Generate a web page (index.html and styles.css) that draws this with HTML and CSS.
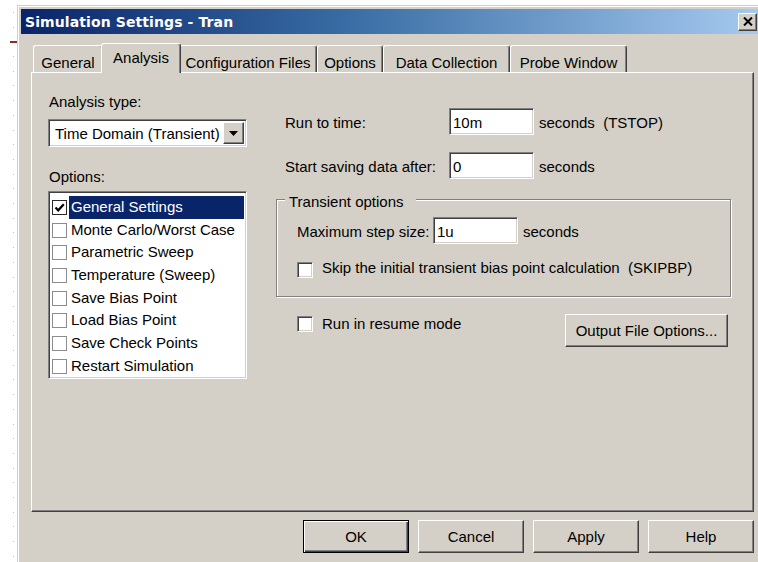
FILE: index.html
```html
<!DOCTYPE html>
<html lang="en">
<head>
<meta charset="utf-8">
<title>Simulation Settings - Tran</title>
<link rel="stylesheet" href="styles.css">
</head>
<body>
<div class="desk">
  <div class="gutter"></div>
  <div class="window">
    <div class="titlebar">
      <span class="title">Simulation Settings - Tran</span>
      <span class="close-btn">
        <svg width="10" height="9" viewBox="0 0 10 9"><path d="M1 0.5 L9 8.5 M9 0.5 L1 8.5" stroke="#000" stroke-width="2" fill="none"/></svg>
      </span>
    </div>

    <div class="tabs">
      <div class="tab tab-general">General</div>
      <div class="tab tab-analysis active">Analysis</div>
      <div class="tab tab-config">Configuration Files</div>
      <div class="tab tab-options">Options</div>
      <div class="tab tab-data">Data Collection</div>
      <div class="tab tab-probe">Probe Window</div>
    </div>

    <div class="panel">
      <div class="col-left">
        <div class="label">Analysis type:</div>
        <div class="combo">
          <span class="combo-text">Time Domain (Transient)</span>
          <span class="combo-btn">
            <svg width="9" height="5" viewBox="0 0 9 5"><path d="M0 0 H9 L4.5 5 Z" fill="#000"/></svg>
          </span>
        </div>
        <div class="label label-options">Options:</div>
        <ul class="listbox">
          <li class="item selected"><span class="flat-check checked"><svg width="13" height="13" viewBox="0 0 13 13"><path d="M2.5 6.5 L5.2 9.3 L10.8 3.2" stroke="#000" stroke-width="2.2" fill="none"/></svg></span><span class="item-text">General Settings</span></li>
          <li class="item"><span class="flat-check"></span><span class="item-text">Monte Carlo/Worst Case</span></li>
          <li class="item"><span class="flat-check"></span><span class="item-text">Parametric Sweep</span></li>
          <li class="item"><span class="flat-check"></span><span class="item-text">Temperature (Sweep)</span></li>
          <li class="item"><span class="flat-check"></span><span class="item-text">Save Bias Point</span></li>
          <li class="item"><span class="flat-check"></span><span class="item-text">Load Bias Point</span></li>
          <li class="item"><span class="flat-check"></span><span class="item-text">Save Check Points</span></li>
          <li class="item"><span class="flat-check"></span><span class="item-text">Restart Simulation</span></li>
        </ul>
      </div>

      <div class="col-right">
        <div class="field-row">
          <span class="field-label">Run to time:</span>
          <div class="edit">10m</div>
          <span class="unit">seconds&nbsp; (TSTOP)</span>
        </div>
        <div class="field-row second">
          <span class="field-label">Start saving data after:</span>
          <div class="edit">0</div>
          <span class="unit">seconds</span>
        </div>

        <fieldset class="group">
          <legend>Transient options</legend>
          <div class="field-row step">
            <span class="field-label">Maximum step size:</span>
            <div class="edit">1u</div>
            <span class="unit">seconds</span>
          </div>
          <div class="check-row skip">
            <span class="check"></span>
            <span class="check-label">Skip the initial transient bias point calculation&nbsp; (SKIPBP)</span>
          </div>
        </fieldset>

        <div class="resume-row">
          <div class="check-row resume">
            <span class="check"></span>
            <span class="check-label">Run in resume mode</span>
          </div>
          <div class="btn btn-output">Output File Options...</div>
        </div>
      </div>
    </div>

    <div class="buttons">
      <div class="btn btn-default">OK</div>
      <div class="btn">Cancel</div>
      <div class="btn">Apply</div>
      <div class="btn">Help</div>
    </div>
  </div>
</div>
</body>
</html>
```

FILE: styles.css
```css
* { box-sizing: border-box; }

html, body {
  margin: 0;
  padding: 0;
  width: 758px;
  height: 562px;
  overflow: hidden;
  background: #fff;
}

body {
  font-family: "Liberation Sans", Arial, sans-serif;
  font-size: 15px;
  color: #000;
}

/* the desktop area clips the window, which continues past the frame */
.desk {
  display: flex;
  align-items: flex-start;
  width: 758px;
  height: 562px;
  overflow: hidden;
}

/* dotted ruler strip left of the window */
.gutter {
  flex: none;
  width: 17px;
  height: 562px;
  background-image:
    linear-gradient(#8e2b2b, #8e2b2b),
    repeating-linear-gradient(to bottom, #c4c4c4 0 1px, transparent 1px 14.7px);
  background-size: 7px 2px, 1px 100%;
  background-position: 10px 41px, 13px 12px;
  background-repeat: no-repeat;
}

/* classic raised window frame */
.window {
  flex: none;
  margin-top: 5px;
  width: 747px;
  height: 600px;
  background: #d4d0c8;
  border: 1px solid;
  border-color: #d4d0c8 #404040 #404040 #d4d0c8;
  box-shadow: inset 1px 1px #fff, inset -1px -1px #808080;
  padding: 3px;
}

.titlebar {
  height: 25px;
  display: flex;
  align-items: center;
  justify-content: space-between;
  padding: 0 3px 0 4px;
  background: linear-gradient(to right, #0a246a 0%, #3a6ea5 45%, #a6caf0 100%);
}

.title {
  font-family: "DejaVu Sans", Verdana, sans-serif;
  font-weight: bold;
  font-size: 14px;
  color: #fff;
  letter-spacing: 0.1px;
}

.close-btn {
  width: 19px;
  height: 18px;
  display: flex;
  align-items: center;
  justify-content: center;
  background: #d4d0c8;
  border: 1px solid;
  border-color: #fff #404040 #404040 #fff;
  box-shadow: inset -1px -1px #808080;
}

/* tab strip */
.tabs {
  display: flex;
  align-items: flex-end;
  height: 29px;
  margin: 9px 0 0 10px;
  padding-left: 2px;
}

.tab {
  flex: none;
  height: 27px;
  padding-top: 8px;
  line-height: 18px;
  text-align: center;
  white-space: nowrap;
  border-top: 1px solid #fff;
  border-left: 1px solid #fff;
  border-right: 1px solid #404040;
  border-radius: 3px 3px 0 0;
  box-shadow: inset -1px 0 #808080;
}

.tab-general { width: 70px; }
.tab-analysis { width: 76px; }
.tab-config { width: 138px; }
.tab-options { width: 66px; }
.tab-data { width: 127px; }
.tab-probe { width: 117px; }

.tab.active {
  width: 80px;
  height: 30px;
  margin: 0 -2px -1px;
  padding-top: 5px;
  background: #d4d0c8;
  position: relative;
  z-index: 1;
}

/* tab page */
.panel {
  margin-left: 10px;
  width: 723px;
  height: 440px;
  border: 1px solid;
  border-color: #fff #404040 #404040 #fff;
  box-shadow: inset -1px -1px #808080;
  display: grid;
  grid-template-columns: 199px 456px;
  column-gap: 29px;
  align-items: start;
  padding: 20px 0 0 16px;
}

.label {
  line-height: 18px;
  padding-left: 1px;
}

.label-options { margin-top: 21px; }

/* sunken 3D edge shared by edits, combo and list */
.combo, .listbox, .edit {
  background: #fff;
  border: 1px solid;
  border-color: #808080 #fff #fff #808080;
  box-shadow: inset 1px 1px #404040, inset -1px -1px #d4d0c8;
}

.combo {
  margin-top: 8px;
  height: 28px;
  display: flex;
  align-items: stretch;
  padding: 2px;
}

.combo-text {
  flex: 1;
  line-height: 18px;
  padding: 3px 0 0 4px;
  white-space: nowrap;
}

.combo-btn {
  flex: none;
  width: 21px;
  display: flex;
  align-items: center;
  justify-content: center;
  background: #d4d0c8;
  border: 1px solid;
  border-color: #fff #404040 #404040 #fff;
  box-shadow: inset -1px -1px #808080;
}

.listbox {
  list-style: none;
  margin: 5px 0 0;
  padding: 4px 2px 0;
  height: 188px;
}

.item {
  height: 22.67px;
  display: flex;
  align-items: stretch;
  padding-left: 1px;
}

.flat-check {
  flex: none;
  width: 15px;
  height: 15px;
  margin: 4px 2px 0 0;
  border: 1px solid #8c8c8c;
  background: #fff;
  display: flex;
  align-items: center;
  justify-content: center;
}

.flat-check.checked { border-color: #2a2a2a; }

.item-text {
  flex: 1;
  line-height: 22px;
  padding-left: 2px;
  white-space: nowrap;
}

.item.selected .item-text {
  background: #0a246a;
  color: #fff;
}

/* right column */
.col-right { margin-top: 15px; }

.field-row {
  display: flex;
  align-items: baseline;
  padding-left: 9px;
  white-space: nowrap;
}

.field-row.second { margin-top: 17px; }

.field-label {
  flex: none;
  width: 164px;
  line-height: 18px;
}

.edit {
  flex: none;
  width: 85px;
  height: 27px;
  line-height: 16px;
  padding: 6px 3px 1px 3px;
}

.unit {
  margin-left: 5px;
  line-height: 18px;
}

/* etched group box */
.group {
  margin: 8px 0 0;
  width: 455px;
  min-width: 0;
  padding: 6px 0 18px 0;
  border: 1px solid #808080;
  box-shadow: inset 1px 1px #fff, 1px 1px #fff;
}

.group legend {
  margin-left: 8px;
  padding: 6px 12px 0 4px;
  line-height: 18px;
  background: #d4d0c8;
}

.field-row.step { padding-left: 20px; }
.field-row.step .field-label { width: 136px; }

.check-row {
  display: flex;
  align-items: flex-start;
  white-space: nowrap;
}

.check-row.skip {
  margin-top: 15px;
  padding-left: 20px;
}

.check {
  flex: none;
  width: 16px;
  height: 16px;
  margin: 3px 9px 0 0;
  background: #fff;
  border: 1px solid;
  border-color: #808080 #fff #fff #808080;
  box-shadow: inset 1px 1px #404040, inset -1px -1px #d4d0c8;
}

.check-label { line-height: 18px; }

.resume-row {
  margin-top: 17px;
  display: flex;
  justify-content: space-between;
  align-items: flex-start;
  padding: 0 4px 0 21px;
}

.check-row.resume { margin-top: 1px; }
.check-row.resume .check { margin-top: 1px; }

/* push buttons */
.btn {
  flex: none;
  width: 106px;
  height: 33px;
  line-height: 18px;
  padding-top: 7px;
  text-align: center;
  white-space: nowrap;
  background: #d4d0c8;
  border: 1px solid;
  border-color: #fff #404040 #404040 #fff;
  box-shadow: inset -1px -1px #808080;
}

.btn-output { width: 163px; }

.btn-default {
  border-color: #000;
  box-shadow: inset 1px 1px #fff, inset -1px -1px #404040, inset -2px -2px #808080;
}

.buttons {
  margin: 8px 0 0 10px;
  width: 723px;
  display: flex;
  justify-content: flex-end;
  gap: 9px;
}
```
